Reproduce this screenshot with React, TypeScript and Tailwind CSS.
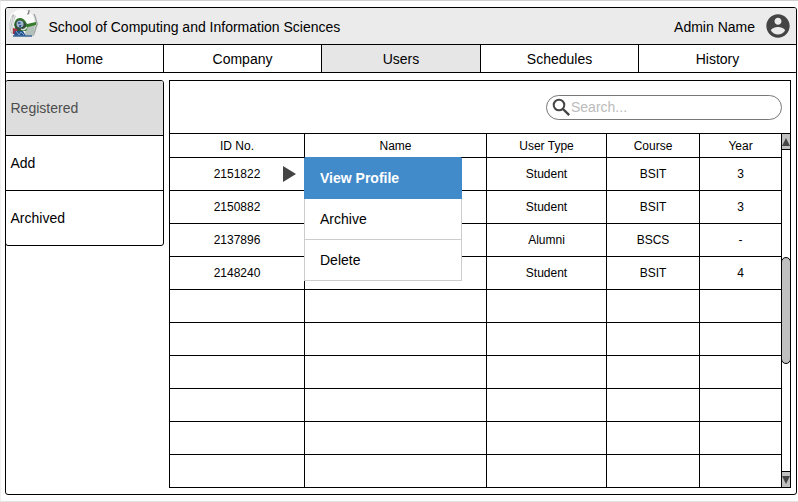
const navItems = ["Home", "Company", "Users", "Schedules", "History"];
const sideItems = ["Registered", "Add", "Archived"];
const columns = ["ID No.", "Name", "User Type", "Course", "Year"];
const columnGrid = "grid grid-cols-[135px_182px_120px_93px_82px]";
const rows: string[][] = [
  ["2151822", "", "Student", "BSIT", "3"],
  ["2150882", "", "Student", "BSIT", "3"],
  ["2137896", "", "Alumni", "BSCS", "-"],
  ["2148240", "", "Student", "BSIT", "4"],
  ...Array.from({ length: 6 }, () => ["", "", "", "", ""]),
];

function Logo() {
  return (
    <svg width="32" height="34" viewBox="0 -3 32 34" className="shrink-0">
      <ellipse cx="13.500" cy="9" rx="12.500" ry="11.500" fill="#fbfbfb" />
      <path d="M5 2 Q-1 10 3 21 L7 23 Q3 12 8 4Z" fill="#b9bcbc" />
      <path d="M4 5 Q1 12 4 20 M7 3 Q3 10 6 20" stroke="#eee" strokeWidth="1" fill="none" />
      <path d="M19.500 2.500 Q21.500 1 21 -2" stroke="#777" strokeWidth="1.2" fill="none" />
      <path d="M26 2 Q28 6 28.500 10 Q30 12 28 15 Q27 20 25 24" stroke="#9ba39f" strokeWidth="1.400" fill="none" />
      <path d="M18 13 L27 12 L26 24 H17Z" fill="#b3bfb9" />
      <path d="M6 13 Q7 5 13 6 Q17 7 19 12 L28 10 L28 13 L20 15 L18 19 L8 19Z" fill="#347b2c" />
      <path d="M7 12 Q9 6 14 8 L18 12 L17 18 L8 19Z" fill="#344b3d" />
      <circle cx="12" cy="12" r="3.500" fill="#9fb7cc" />
      <path d="M10 11h2.500M13 13l-1 2M11 14h1" stroke="#284b8e" strokeWidth="1.300" />
      <path d="M13 17 Q16 19 19 15" stroke="#dbe7dc" strokeWidth="1.500" fill="none" />
      <path d="M5 16 L9 17 L9 22 H5Z" fill="#a83241" />
      <path d="M7 19 L15 19 L18 24 H6Z" fill="#244f91" />
      <path d="M8 19l3 4 2-3 3 3" stroke="#78a7c5" strokeWidth="1" fill="none" />
      <path d="M5 24H24" stroke="#416b9e" strokeWidth="1.600" />
    </svg>
  );
}

function Header() {
  return (
    <header className="flex h-[36px] items-center rounded-t-[2px] bg-[#ebebeb] pl-[2px] pr-[4px]">
      <Logo />
      <h1 className="ml-[8.500px] flex-1 pt-[2px]">School of Computing and Information Sciences</h1>
      <span className="mr-[9px] pt-[2px]">Admin Name</span>
      <svg width="28" height="28" viewBox="0 0 24 24" fill="#444">
        <path d="M12 2C6.48 2 2 6.48 2 12s4.480 10 10 10 10-4.480 10-10S17.520 2 12 2zm0 3c1.660 0 3 1.340 3 3s-1.340 3-3 3-3-1.340-3-3 1.340-3 3-3zm0 14.200c-2.500 0-4.710-1.280-6-3.220.030-1.990 4-3.080 6-3.080 1.990 0 5.970 1.090 6 3.080-1.290 1.940-3.500 3.220-6 3.220z" />
      </svg>
    </header>
  );
}

function ContextMenu() {
  return (
    <div className="absolute left-[134px] top-0 z-10 w-[158px] -translate-y-px rounded-t-[2px] text-[14px]">
      <div className="flex h-[42px] items-center rounded-t-[2px] bg-[#428bca] pl-[16px] font-bold text-white">
        View Profile
      </div>
      <div className="flex h-[41px] items-center border-x border-b border-[#ccc] bg-white pl-[15px]">Archive</div>
      <div className="flex h-[41px] items-center border-x border-b border-[#ccc] bg-white pl-[15px]">Delete</div>
    </div>
  );
}

function Scrollbar() {
  return (
    <div className="flex w-[8px] flex-col border-t border-black">
      <div className="flex h-[16px] items-center border-b border-black bg-[#c0c0c0]">
        <svg width="8" height="8" viewBox="0 0 8 8"><path d="M4 0 8 8H0Z" fill="#444" /></svg>
      </div>
      <div className="flex-1 pt-[107px]">
        <div className="-mx-px h-[107px] rounded-full border border-black bg-[#c0c0c0]" />
      </div>
      <div className="flex h-[16px] items-center border-t border-black bg-[#c0c0c0]">
        <svg width="8" height="8" viewBox="0 0 8 8"><path d="M0 0H8L4 8Z" fill="#444" /></svg>
      </div>
    </div>
  );
}

function UsersTable() {
  return (
    <div className="w-[612px] text-[12px]">
      <div className={`${columnGrid} h-[24px] border-t border-black`}>
        {columns.map((name) => (
          <div key={name} className="flex items-center justify-center border-r border-black pt-px">{name}</div>
        ))}
      </div>
      {rows.map((row, i) => (
        <div key={i} className={`${columnGrid} relative h-[33px] border-t border-black`}>
          {row.map((cell, j) => (
            <div key={j} className="flex items-center justify-center border-r border-black">{cell}</div>
          ))}
          {i === 0 && (
            <>
              <svg className="absolute left-[113px] top-[8px]" width="13" height="16" viewBox="0 0 13 16">
                <path d="M0 0 13 8 0 16Z" fill="#444" />
              </svg>
              <ContextMenu />
            </>
          )}
        </div>
      ))}
    </div>
  );
}

export default function App() {
  return (
    <div className="h-[502px] w-[798px] border-b border-l border-t border-b-[#e2e2e2] border-l-[#f0f0f0] border-t-[#cfcfcf] bg-white pl-[4px] pt-[6px] font-['Liberation_Sans',Arial,sans-serif] text-[14px] leading-[16px] text-black">
      <div className="h-[488px] w-[792px] rounded-[3px] border border-black">
        <Header />
        <nav className="-mx-px grid h-[29px] grid-cols-[159px_158px_159px_158px_158px] rounded-[2px] border-y border-black">
          {navItems.map((item) => (
            <div
              key={item}
              className={`flex items-center justify-center border-r border-black pt-px first:border-l ${item === "Users" ? "bg-[#e6e6e6]" : ""}`}
            >
              {item}
            </div>
          ))}
        </nav>
        <main className="flex pt-[7px]">
          <aside className="-ml-px mr-[5px] h-[166px] w-[159px] overflow-hidden rounded-[3px] border border-black">
            {sideItems.map((item) => (
              <div
                key={item}
                className={`flex h-[55px] items-center border-b border-black pl-[4.500px] last:h-[54px] last:border-b-0 ${item === "Registered" ? "bg-[#dddddd] text-[#4d4d4d]" : ""}`}
              >
                {item}
              </div>
            ))}
          </aside>
          <section className="h-[408px] w-[622px] border border-black">
            <div className="flex h-[52px] items-center justify-end pr-[8px]">
              <label className="flex h-[25px] w-[236px] items-center rounded-full border border-[#777] pl-[5px] text-[#bbb]">
                <svg width="19" height="19" viewBox="0 0 19 19" fill="none" stroke="#444">
                  <circle cx="7" cy="7" r="5.300" strokeWidth="2" />
                  <path d="m11 11 6.200 6.200" strokeWidth="2.400" />
                </svg>
                <span>Search...</span>
              </label>
            </div>
            <div className="flex h-[354px]">
              <UsersTable />
              <Scrollbar />
            </div>
          </section>
        </main>
      </div>
    </div>
  );
}
